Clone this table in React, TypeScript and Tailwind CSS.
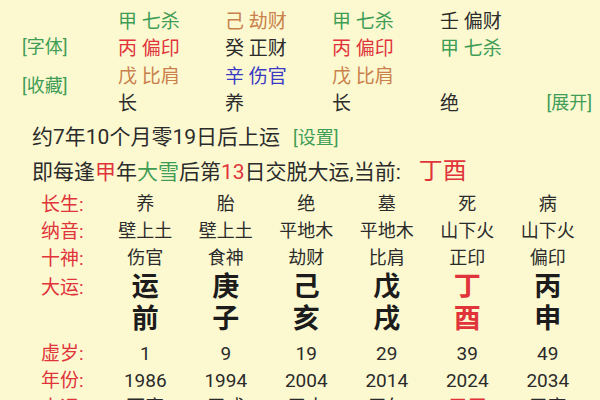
import React from "react";

const GREEN = "text-[#3f9d55]";
const RED = "text-[#e0343a]";
const ORANGE = "text-[#c9804a]";
const BLUE = "text-[#3a3ac4]";
const DARK = "text-[#2b2b2b]";

type Cell = { t: string; c: string };

const topRows: Cell[][] = [
  [
    { t: "申", c: GREEN },
    { t: "丑 未", c: ORANGE },
    { t: "申", c: GREEN },
    { t: "子", c: DARK },
  ],
  [
    { t: "甲 七杀", c: GREEN },
    { t: "己 劫财", c: ORANGE },
    { t: "甲 七杀", c: GREEN },
    { t: "壬 偏财", c: DARK },
  ],
  [
    { t: "丙 偏印", c: RED },
    { t: "癸 正财", c: DARK },
    { t: "丙 偏印", c: RED },
    { t: "甲 七杀", c: GREEN },
  ],
  [
    { t: "戊 比肩", c: ORANGE },
    { t: "辛 伤官", c: BLUE },
    { t: "戊 比肩", c: ORANGE },
    { t: "", c: DARK },
  ],
];

const lastTop = ["长", "养", "长", "绝"];

const smallRows = [
  { label: "长生:", vals: ["养", "胎", "绝", "墓", "死", "病"] },
  { label: "纳音:", vals: ["壁上土", "壁上土", "平地木", "平地木", "山下火", "山下火"] },
  { label: "十神:", vals: ["伤官", "食神", "劫财", "比肩", "正印", "偏印"] },
];

const bigTop = ["运", "庚", "己", "戊", "丁", "丙"];
const bigBottom = ["前", "子", "亥", "戌", "酉", "申"];

const ageRows = [
  { label: "虚岁:", vals: ["1", "9", "19", "29", "39", "49"] },
  { label: "年份:", vals: ["1986", "1994", "2004", "2014", "2024", "2034"] },
  { label: "小运:", vals: ["丙寅", "甲戌", "甲申", "甲午", "甲辰", "甲寅"] },
];

const font = { fontFamily: 'Roboto, "Noto Sans CJK SC", sans-serif' };

export default function App() {
  return (
    <div
      className="w-[600px] h-[400px] overflow-hidden bg-[#fcf9d1] text-[#2b2b2b]"
      style={font}
    >
      {/* hidden stems block */}
      <div className="flex -mt-[20px]">
        <div className={`w-[118px] pl-[22px] pt-[55px] flex flex-col gap-[15px] text-[18px] leading-[24px] ${GREEN}`}>
          <span>[字体]</span>
          <span>[收藏]</span>
        </div>
        <div className="flex-1 flex flex-col">
          {topRows.map((row, i) => (
            <div key={i} className="grid grid-cols-[107px_107px_108px_1fr] h-[27.5px] items-center text-[19px] leading-none">
              {row.map((cell, j) => (
                <span key={j} className={`${cell.c} ${i === 0 ? "-mt-[8px] text-[22px]" : ""}`}>
                  {cell.t}
                </span>
              ))}
            </div>
          ))}
          <div className="grid grid-cols-[107px_107px_108px_1fr] h-[27.5px] items-center text-[19px] leading-none">
            <span>{lastTop[0]}</span>
            <span>{lastTop[1]}</span>
            <span>{lastTop[2]}</span>
            <div className="flex justify-between pr-[8px]">
              <span>{lastTop[3]}</span>
              <span className={`text-[18px] ${GREEN}`}>[展开]</span>
            </div>
          </div>
        </div>
      </div>

      {/* start info */}
      <div className="pl-[32px] pt-[2px]">
        <div className="flex items-baseline h-[34px] leading-[34px] text-[21px]">
          <span>约7年10个月零19日后上运</span>
          <span className={`ml-[13px] text-[18px] ${GREEN}`}>[设置]</span>
        </div>
        <div className="flex items-baseline h-[34px] leading-[34px] text-[21px] whitespace-nowrap">
          <span>即每逢</span>
          <span className={RED}>甲</span>
          <span>年</span>
          <span className={GREEN}>大雪</span>
          <span>后第</span>
          <span className={RED}>13</span>
          <span>日交脱大运,当前:</span>
          <span className={`ml-[18px] text-[24px] ${RED}`}>丁酉</span>
        </div>
      </div>

      {/* luck pillars table */}
      <div className="mt-[3px] flex flex-col">
        {smallRows.map((r) => (
          <div key={r.label} className="flex items-center h-[27px] text-[18px] leading-none">
            <span className={`w-[105px] pl-[41px] text-[19px] ${RED}`}>{r.label}</span>
            {r.vals.map((v, i) => (
              <span key={i} className="w-[80.5px] text-center">{v}</span>
            ))}
          </div>
        ))}
        <div className="flex items-center h-[32px] leading-none">
          <span className={`w-[105px] pl-[41px] text-[19px] ${RED}`}>大运:</span>
          {bigTop.map((v, i) => (
            <span key={i} className={`w-[80.5px] text-center text-[27px] font-bold ${i === 4 ? RED : "text-[#1c1c1c]"}`}>{v}</span>
          ))}
        </div>
        <div className="flex items-center h-[32px] leading-none">
          <span className="w-[105px]" />
          {bigBottom.map((v, i) => (
            <span key={i} className={`w-[80.5px] text-center text-[27px] font-bold ${i === 4 ? RED : "text-[#1c1c1c]"}`}>{v}</span>
          ))}
        </div>
        <div className="mt-[4px] flex flex-col">
          {ageRows.map((r, ri) => (
            <div key={r.label} className="flex items-center h-[27px] text-[19px] leading-none">
              <span className={`w-[105px] pl-[41px] ${RED}`}>{r.label}</span>
              {r.vals.map((v, i) => (
                <span key={i} className={`w-[80.5px] text-center ${ri === 2 && i === 4 ? RED : ""}`}>{v}</span>
              ))}
            </div>
          ))}
        </div>
      </div>
    </div>
  );
}
